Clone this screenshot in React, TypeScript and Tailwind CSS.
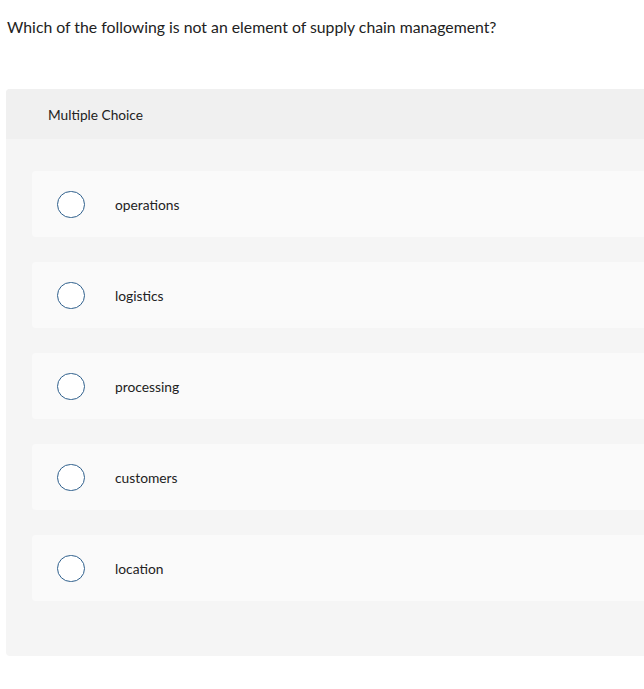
const options = ['operations', 'logistics', 'processing', 'customers', 'location'];

export default function App() {
  return (
    <div className="w-[644px] h-[689px] overflow-hidden bg-white text-[#222]" style={{ fontFamily: 'Lato, sans-serif' }}>
      <p className="pl-[7px] pt-[17px] text-[15.8px] leading-5">
        Which of the following is not an element of supply chain management?
      </p>
      <div className="ml-[6px] mt-[52px] w-[700px] rounded-[4px] bg-[#f5f5f5] overflow-hidden">
        <div className="h-[50px] bg-[#f0f0f0] pl-[42px] pt-[2px] flex items-center text-[13.7px]">Multiple Choice</div>
        <div className="pl-[26px] pt-[32px] pb-[55px] flex flex-col gap-[25px]">
          {options.map((o) => (
            <div key={o} className="h-[66px] bg-[#fafafa] rounded-l-[4px] flex items-center">
              <span className="ml-[25px] w-[28px] h-[27px] rounded-full border border-[#2e5f8c] bg-white" />
              <span className="ml-[30px] pt-[3px] text-[13.8px]">{o}</span>
            </div>
          ))}
        </div>
      </div>
    </div>
  );
}
